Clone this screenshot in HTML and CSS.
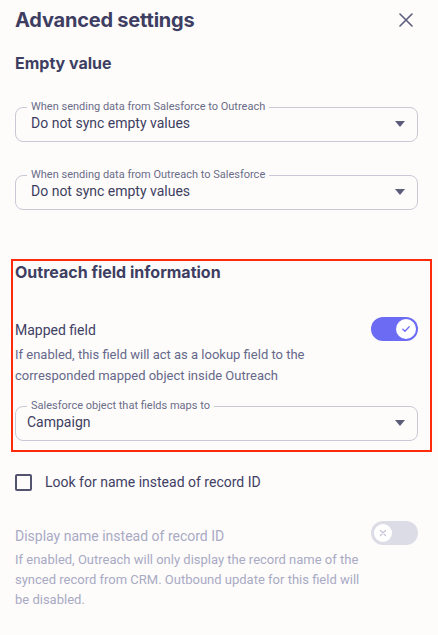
FILE: index.html
```html
<!DOCTYPE html>
<html lang="en">
<head>
<meta charset="utf-8">
<title>Advanced settings</title>
<link rel="stylesheet" href="styles.css">
</head>
<body>
<div class="panel">
  <header class="header">
    <h1 class="title">Advanced settings</h1>
    <button class="close" aria-label="Close">
      <svg width="14" height="14" viewBox="0 0 14 14"><path d="M1 1 L13 13 M13 1 L1 13" stroke="#5b5d7a" stroke-width="1.6" fill="none" stroke-linecap="round"/></svg>
    </button>
  </header>

  <h2 class="section-title">Empty value</h2>

  <fieldset class="select select-first">
    <legend>When sending data from Salesforce to Outreach</legend>
    <div class="select-value"><span>Do not sync empty values</span><span class="arrow"></span></div>
  </fieldset>

  <fieldset class="select select-second">
    <legend>When sending data from Outreach to Salesforce</legend>
    <div class="select-value"><span>Do not sync empty values</span><span class="arrow"></span></div>
  </fieldset>

  <section class="highlight">
    <h2 class="group-title">Outreach field information</h2>
    <div class="toggle-row mapped">
      <div class="toggle-text">
        <div class="toggle-label">Mapped field</div>
        <p class="toggle-desc">If enabled, this field will act as a lookup field to the corresponded mapped object inside Outreach</p>
      </div>
      <span class="toggle on">
        <span class="knob">
          <svg width="10" height="10" viewBox="0 0 10 10"><path d="M1.8 5.2 L4 7.2 L8.2 2.8" stroke="#6b6cf3" stroke-width="1.3" fill="none" stroke-linecap="round" stroke-linejoin="round"/></svg>
        </span>
      </span>
    </div>
    <fieldset class="select select-object">
      <legend>Salesforce object that fields maps to</legend>
      <div class="select-value value-tight"><span>Campaign</span><span class="arrow"></span></div>
    </fieldset>
  </section>

  <label class="checkbox-row">
    <span class="checkbox"></span>
    <span class="checkbox-label">Look for name instead of record ID</span>
  </label>

  <div class="toggle-row disabled">
    <div class="toggle-text">
      <div class="toggle-label">Display name instead of record ID</div>
      <p class="toggle-desc">If enabled, Outreach will only display the record name of the synced record from CRM. Outbound update for this field will be disabled.</p>
    </div>
    <span class="toggle off">
      <span class="knob">
        <svg width="10" height="10" viewBox="0 0 10 10"><path d="M2.5 2.5 L7.5 7.5 M7.5 2.5 L2.5 7.5" stroke="#c4c5d6" stroke-width="1.2" fill="none" stroke-linecap="round"/></svg>
      </span>
    </span>
  </div>
</div>
</body>
</html>
```

FILE: styles.css
```css
* { box-sizing: border-box; }

html, body {
  margin: 0;
  padding: 0;
  background: #fdfcfb;
}

body {
  font-family: Roboto, "Liberation Sans", sans-serif;
  color: #3f4064;
}

.panel {
  padding: 0 20px 0 15px;
}

.header {
  display: flex;
  align-items: center;
  justify-content: space-between;
  padding-top: 6px;
}

.title {
  margin: 0;
  font-family: Inter, "Liberation Sans", sans-serif;
  font-size: 20px;
  line-height: 28px;
  font-weight: 700;
  color: #3d3e62;
  letter-spacing: -0.2px;
}

.close {
  border: 0;
  background: none;
  padding: 0;
  margin-right: 5px;
  width: 14px;
  height: 14px;
  display: flex;
}

.section-title {
  margin: 18px 0 0;
  font-family: Inter, "Liberation Sans", sans-serif;
  font-size: 16px;
  line-height: 22px;
  font-weight: 700;
  color: #3d3e62;
}

.select {
  margin: 27px 0 0;
  padding: 0 12px 8px 11px;
  border: 1px solid #c9c9d5;
  border-radius: 8px;
  min-width: 0;
}

.select legend {
  padding: 0 4px;
  font-size: 11px;
  line-height: 12px;
  color: #6b6c88;
}

.select-value {
  display: flex;
  align-items: center;
  justify-content: space-between;
  padding-left: 4px;
  font-size: 14px;
  line-height: 20px;
  color: #3d3e5f;
}

.value-tight {
  padding-left: 0;
}

.arrow {
  width: 0;
  height: 0;
  border-left: 5px solid transparent;
  border-right: 5px solid transparent;
  border-top: 6px solid #5c5d7a;
  margin-top: 1px;
}

.highlight {
  margin: 49px -14px 0 -4px;
  padding: 1px 12px 9px 2px;
  border: 2px solid #ff2a0a;
}

.group-title {
  margin: 0;
  font-family: Inter, "Liberation Sans", sans-serif;
  font-size: 16px;
  line-height: 20px;
  font-weight: 700;
  color: #3d3e62;
}

.toggle-row {
  display: flex;
  align-items: flex-start;
  justify-content: space-between;
}

.mapped {
  margin-top: 35px;
}

.toggle-text {
  width: 356px;
}

.toggle-label {
  font-size: 14px;
  line-height: 24px;
  padding-top: 1px;
  color: #3f4064;
}

.toggle-desc {
  margin: 2px 0 0;
  font-size: 13px;
  line-height: 21px;
  color: #66688a;
}

.toggle {
  flex: none;
  width: 47px;
  height: 24px;
  border-radius: 12px;
  display: flex;
  align-items: center;
  padding: 0 2px;
}

.toggle.on {
  background: #6b6cf3;
  justify-content: flex-end;
}

.toggle.off {
  background: #dcdce6;
  justify-content: flex-start;
  padding: 0 3px;
}

.knob {
  width: 20px;
  height: 20px;
  border-radius: 50%;
  background: #ffffff;
  display: flex;
  align-items: center;
  justify-content: center;
}

.off .knob {
  width: 18px;
  height: 18px;
}

.select-object {
  margin-top: 14px;
}

.checkbox-row {
  display: flex;
  align-items: center;
  gap: 13px;
  margin-top: 20px;
}

.checkbox {
  width: 17px;
  height: 17px;
  border: 2px solid #52536f;
  border-radius: 2px;
  flex: none;
}

.checkbox-label {
  font-size: 14px;
  line-height: 20px;
  color: #3f4064;
}

.disabled {
  margin-top: 29px;
}

.disabled .toggle-label {
  color: #a9aac4;
  padding-top: 3px;
}

.disabled .toggle-desc {
  color: #a9aac4;
  margin-top: 2px;
  line-height: 20px;
}
```
